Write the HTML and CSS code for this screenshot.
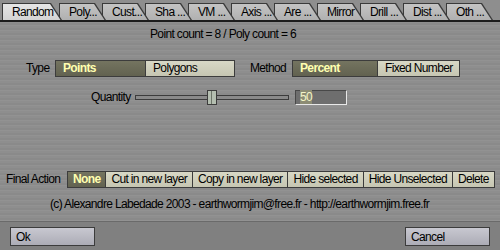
FILE: index.html
```html
<!DOCTYPE html>
<html lang="en">
<head>
  <meta charset="UTF-8" />
  <title>Random</title>
  <link rel="stylesheet" href="styles.css">
</head>
<body>
  <div class="tabs">
    <div class="tab active" style="z-index: 20">Random</div>
    <div class="tab" style="z-index: 19">Poly...</div>
    <div class="tab" style="z-index: 18">Cust...</div>
    <div class="tab" style="z-index: 17">Sha ...</div>
    <div class="tab" style="z-index: 16">VM ...</div>
    <div class="tab" style="z-index: 15">Axis ...</div>
    <div class="tab" style="z-index: 14">Are ...</div>
    <div class="tab" style="z-index: 13">Mirror</div>
    <div class="tab" style="z-index: 12">Drill ...</div>
    <div class="tab" style="z-index: 11">Dist ...</div>
    <div class="tab" style="z-index: 10">Oth ...</div>
  </div>

  <div class="panel">
    <div class="counts">Point count = 8 / Poly count = 6</div>

    <div class="options">
      <span class="label type-label">Type</span>
      <div class="choice type-choice">
        <span class="opt selected">Points</span>
        <span class="opt">Polygons</span>
      </div>
      <span class="label method-label">Method</span>
      <div class="choice method-choice">
        <span class="opt selected">Percent</span>
        <span class="opt">Fixed Number</span>
      </div>
    </div>

    <div class="quantity">
      <span class="label">Quantity</span>
      <div class="slider">
        <div class="thumb"></div>
      </div>
      <div class="field"><span class="sel">50</span></div>
    </div>

    <div class="actions">
      <span class="label">Final Action</span>
      <div class="choice">
        <span class="opt selected">None</span>
        <span class="opt">Cut in new layer</span>
        <span class="opt">Copy in new layer</span>
        <span class="opt">Hide selected</span>
        <span class="opt">Hide Unselected</span>
        <span class="opt">Delete</span>
      </div>
    </div>

    <div class="credits">(c) Alexandre Labedade 2003 - earthwormjim@free.fr - http://earthwormjim.free.fr</div>
  </div>

  <div class="footer">
    <button class="btn">Ok</button>
    <button class="btn">Cancel</button>
  </div>
</body>
</html>
```

FILE: styles.css
```css
body {
  margin: 0;
  width: 500px;
  height: 250px;
  overflow: hidden;
  font-family: "Liberation Sans", Arial, sans-serif;
  font-size: 12px;
  letter-spacing: -0.65px;
  color: #000;
  background-color: #8e8e8e;
  white-space: nowrap;
}

/* tab strip */
.tabs {
  display: flex;
  align-items: flex-end;
  height: 20px;
  padding-left: 2px;
  background-color: #8e8e8e;
  border-bottom: 2px solid #1c1c1c;
}

.tab {
  position: relative;
  flex: none;
  width: 47px;
  height: 17px;
  margin-right: -4px;
  padding-left: 10px;
  box-sizing: border-box;
  line-height: 18px;
  overflow: hidden;
  background-color: #3a3a3a;
  clip-path: polygon(0 0, calc(100% - 11px) 0, 100% 100%, 0 100%);
}

.tab::before {
  content: '';
  position: absolute;
  top: 1px;
  left: 1px;
  right: 0;
  bottom: 0;
  z-index: -1;
  background: linear-gradient(#c4c4c4, #b0b0b0);
  clip-path: polygon(0 0, calc(100% - 12px) 0, calc(100% - 1.5px) 100%, 0 100%);
}

.tab.active {
  width: 60px;
  margin-right: -3px;
}

.tab.active::before {
  background: linear-gradient(#e6e6e6, #d4d4d4);
}

/* main panel */
.panel {
  height: 199px;
  box-sizing: border-box;
  padding-top: 4px;
  background-color: #8e8e8e;
  background-image: repeating-linear-gradient(0deg, rgba(255, 255, 255, 0.04) 0 1px, rgba(0, 0, 0, 0.03) 1px 3px, rgba(255, 255, 255, 0) 3px 5px);
}

.counts {
  height: 16px;
  line-height: 16px;
  padding-left: 150px;
}

.label {
  line-height: 17px;
}

.choice {
  display: flex;
  height: 17px;
  border: 1px solid #3c3c3c;
  box-sizing: border-box;
}

.opt {
  padding-left: 7px;
  line-height: 15px;
  background: linear-gradient(#d8d8c6, #c6c6b2);
  border-left: 1px solid #3c3c3c;
  box-sizing: border-box;
}

.opt:first-child {
  border-left: none;
}

.opt.selected {
  color: #ffffb0;
  font-weight: bold;
  background: linear-gradient(#747460, #626250);
}

.options {
  display: flex;
  align-items: center;
  margin-top: 18px;
}

.type-label {
  margin-left: 26px;
  width: 29px;
}

.type-choice {
  width: 180px;
}

.type-choice .opt {
  width: 90px;
}

.method-label {
  margin-left: 15px;
  width: 42px;
}

.method-choice {
  width: 168px;
}

.method-choice .opt {
  width: 85px;
}

.method-choice .opt + .opt {
  width: 83px;
}

.quantity {
  display: flex;
  align-items: center;
  height: 15px;
  margin-top: 13px;
}

.quantity .label {
  margin-left: 91px;
  width: 44px;
}

.slider {
  position: relative;
  width: 154px;
  height: 5px;
  box-sizing: border-box;
  border: 1px solid #3c3c3c;
  background-color: #8a8a8a;
}

.thumb {
  position: absolute;
  left: 71px;
  top: -6px;
  width: 10px;
  height: 15px;
  box-sizing: border-box;
  border: 1px solid #3c3c3c;
  background: linear-gradient(90deg, #b4beb0 0 3px, #6c7468 3px 4px, #b4beb0 4px);
}

.field {
  width: 52px;
  height: 15px;
  margin-left: 6px;
  padding-left: 4px;
  box-sizing: border-box;
  border-top: 1px solid #484848;
  border-left: 1px solid #484848;
  border-bottom: 1px solid #e8e8e8;
  border-right: 1px solid #e8e8e8;
  background-color: #6e6e6e;
  line-height: 13px;
}

.field .sel {
  color: #f4f4c8;
  background-color: #8c8c74;
}

.actions {
  display: flex;
  align-items: center;
  margin-top: 66px;
}

.actions .label {
  margin-left: 6px;
  width: 61px;
}

.actions .opt {
  padding: 0 5px;
}

.credits {
  margin-top: 9px;
  padding-left: 50px;
  line-height: 14px;
}

/* bottom bar */
.footer {
  display: flex;
  justify-content: space-between;
  align-items: flex-start;
  height: 29px;
  box-sizing: border-box;
  padding: 5px 10px 0;
  border-top: 1px solid #6a6a6a;
  background-color: #808080;
}

.btn {
  width: 85px;
  height: 19px;
  padding: 0 0 0 5px;
  text-align: left;
  font-family: inherit;
  font-size: 12px;
  letter-spacing: -0.65px;
  color: #000;
  border: 1px solid #3c3c3c;
  background: linear-gradient(#c8c8d0, #acacb6);
}
```
